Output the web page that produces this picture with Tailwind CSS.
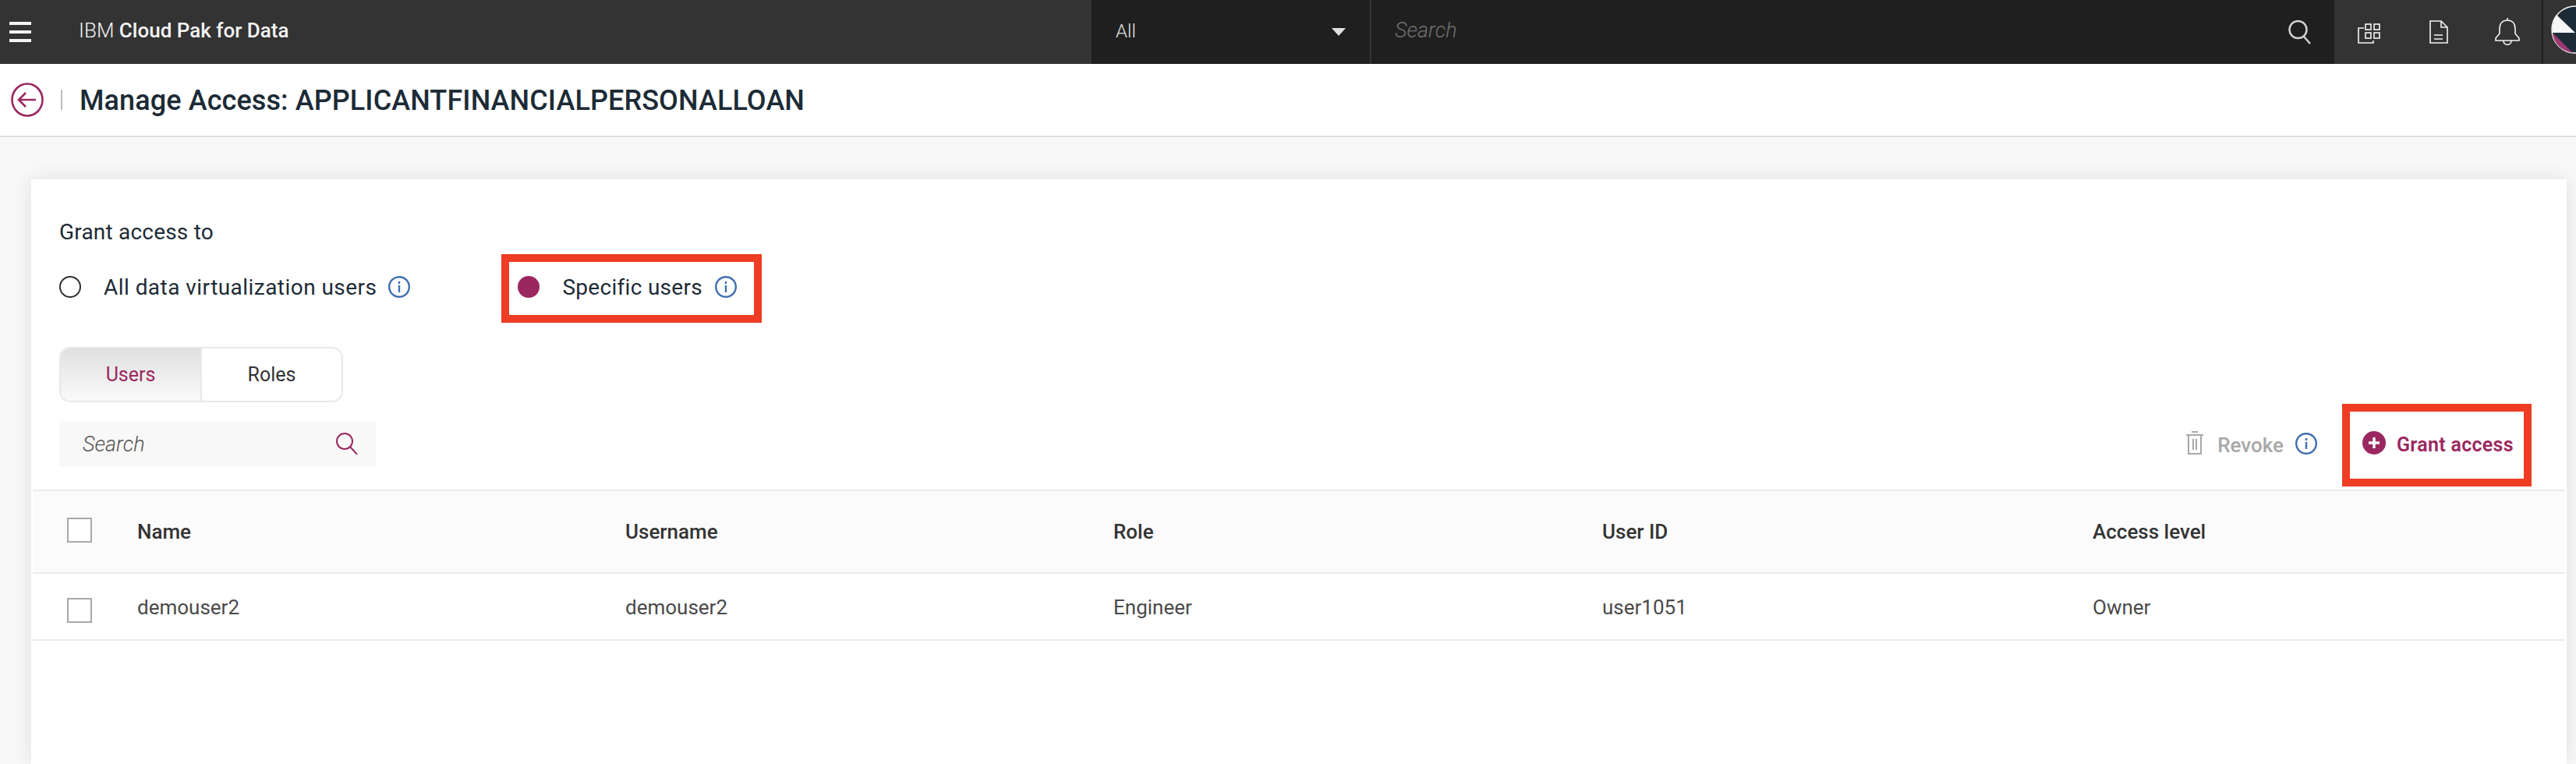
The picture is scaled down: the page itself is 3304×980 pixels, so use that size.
<!doctype html>
<html>
  <head>
    <title>Manage Access</title>
    <script src="https://cdn.jsdelivr.net/npm/@tailwindcss/browser@4"></script>
  </head>

  <body class="bg-[#f8f8f8] font-['Roboto',sans-serif] overflow-hidden">
    <div class="flex flex-col h-[980px] w-[3304px]">
      <!-- Top bar -->
      <header class="flex h-[82px] bg-[#333333] text-white shrink-0">
        <div class="w-[1400px] flex items-center">
          <svg class="ml-[12px] w-[28px] h-[26px]" viewBox="0 0 28 26" fill="#f4f4f4"><rect y="0" width="28" height="4"/><rect y="11" width="28" height="4"/><rect y="22" width="28" height="4"/></svg>
          <p class="ml-[61px] pb-[3px] text-[26px] text-[#f4f4f4]"><span class="font-light">IBM</span> <span class="font-medium">Cloud Pak for Data</span></p>
        </div>
        <div class="w-[359px] bg-[#1f1f1f] flex items-center pl-[31px] pr-[31px] justify-between border-r-2 border-[#333333]">
          <span class="pb-[3px] text-[24px] font-light text-[#e0e0e0]">All</span>
          <svg class="w-[18px] h-[10px]" viewBox="0 0 18 10" fill="#e0e0e0"><path d="M0 0h18L9 10z"/></svg>
        </div>
        <div class="w-[1235px] bg-[#1f1f1f] flex items-center justify-between pl-[30px] pr-[29px]">
          <span class="pb-[3px] text-[27px] italic font-light text-[#6f6f6f]">Search</span>
          <svg class="w-[30px] h-[32px]" viewBox="0 0 30 32" fill="none" stroke="#d0d0d0" stroke-width="2.5"><circle cx="12.5" cy="13" r="11"/><path d="M20 22l8 9"/></svg>
        </div>
        <div class="flex-1 flex items-center relative overflow-hidden">
          <svg class="absolute left-[30px] top-[26px] w-[30px] h-[30px]" viewBox="0 0 30 30" fill="none" stroke="#f4f4f4" stroke-width="1.6"><rect x="10" y="5" width="7" height="7"/><rect x="21" y="5" width="7" height="7"/><rect x="10" y="16" width="7" height="7"/><rect x="21" y="16" width="7" height="7"/><path d="M8 10H1v19h19v-3"/></svg>
          <svg class="absolute left-[122px] top-[26px] w-[24px] h-[30px]" viewBox="0 0 24 30" fill="none" stroke="#f4f4f4" stroke-width="1.6"><path d="M1 1h14l8 8v20H1zM15 1v8h8M6 19h11M6 24h11"/></svg>
          <svg class="absolute left-[205px] top-[22px] w-[34px] h-[36px]" viewBox="0 0 34 36" fill="none" stroke="#f4f4f4" stroke-width="1.6"><path d="M17 4c-6 0-10 4-10 11v6l-5 6v3h30v-3l-5-6v-6c0-7-4-11-10-11zM17 1v3M12 30c0 7 10 7 10 0"/></svg>
          <div class="absolute left-[266px] top-0 w-[2px] h-full bg-[#1f1f1f]"></div>
          <svg class="absolute left-[278px] top-[7px] w-[62px] h-[62px]" viewBox="0 0 62 62"><circle cx="31" cy="31" r="30" fill="#1c2b36" stroke="#f4f4f4" stroke-width="1.5"/><path d="M7 12L31 35H2C1 26 3 18 7 12z" fill="#f7f7f7"/><path d="M2 35L28 61C12 58 3 48 2 35z" fill="#9b3a72"/></svg>
        </div>
      </header>

      <!-- Page heading -->
      <div class="flex items-center h-[94px] bg-white border-b-2 border-[#e0e0e0] shrink-0">
        <svg class="ml-[14px] w-[42px] h-[44px]" viewBox="0 0 42 44" fill="none" stroke="#9b2760" stroke-width="2.6"><ellipse cx="21" cy="22" rx="19.5" ry="20.5"/><path d="M32 22H10M19 13l-9 9 9 9"/></svg>
        <div class="ml-[22px] w-[2px] h-[26px] bg-[#bdbdbd]"></div>
        <h1 class="ml-[22px] pt-[2px] text-[36px] tracking-[0.1px] font-medium text-[#1c2b36] whitespace-nowrap">Manage Access: APPLICANTFINANCIALPERSONALLOAN</h1>
      </div>

      <!-- Card -->
      <main class="flex-1 ml-[40px] mr-[12px] mt-[54px] bg-white shadow-[0_0_24px_rgba(0,0,0,0.1)]">
        <div class="pl-[36px] pr-[45px] pt-[50px]">
          <p class="text-[28px] leading-[36px] tracking-[0.2px] text-[#1c2b36]">Grant access to</p>

          <div class="flex items-center mt-[10px] h-[88px]">
            <div class="flex items-center pb-[4px]">
              <span class="w-[28px] h-[28px] rounded-full border-2 border-[#333333]"></span>
              <span class="ml-[29px] mt-[2px] text-[28px] tracking-[0.45px] text-[#1c2b36] whitespace-nowrap">All data virtualization users</span>
              <svg class="ml-[15px] w-[28px] h-[28px]" viewBox="0 0 28 28" fill="none" stroke="#3f6fb0" stroke-width="2.4"><circle cx="14" cy="14" r="12.8"/><path d="M14 12v9M14 7v3"/></svg>
            </div>
            <div class="flex items-center h-[88px] w-[334px] ml-[117px] pl-[11px] pb-[4px] border-[10px] border-[#ee3d24]">
              <span class="w-[28px] h-[28px] rounded-full bg-[#9b2760]"></span>
              <span class="ml-[29px] mt-[2px] text-[28px] tracking-[0.3px] text-[#1c2b36] whitespace-nowrap">Specific users</span>
              <svg class="ml-[16px] w-[28px] h-[28px]" viewBox="0 0 28 28" fill="none" stroke="#3f6fb0" stroke-width="2.4"><circle cx="14" cy="14" r="12.8"/><path d="M14 12v9M14 7v3"/></svg>
            </div>
          </div>

          <div class="flex w-[364px] h-[71px] mt-[31px] rounded-[14px] border-2 border-[#e8e8e8] overflow-hidden text-[25px]">
            <div class="w-[181px] flex items-center justify-center bg-gradient-to-b from-[#e0e0e0] to-[#fafafa] border-r-2 border-[#e8e8e8] text-[#9b2760]">Users</div>
            <div class="flex-1 flex items-center justify-center text-[#333333]">Roles</div>
          </div>

          <div class="flex justify-between items-start mt-[2px] h-[106px]">
            <div class="flex items-center justify-between w-[406px] h-[58px] mt-[22px] pl-[30px] pr-[22px] bg-[#f8f8f8]">
              <span class="pt-[2px] text-[27px] italic font-light text-[#555555]">Search</span>
              <svg class="w-[32px] h-[28px]" viewBox="0 0 32 28" fill="none" stroke="#9b2760" stroke-width="2"><circle cx="14" cy="11" r="10"/><path d="M21 18l9 10"/></svg>
            </div>
            <div class="flex items-center">
              <svg class="w-[22px] h-[30px] mb-[6px]" viewBox="0 0 22 30" fill="none" stroke="#a8a8a8" stroke-width="2"><path d="M0 5h22M7 1h8M3 5v24h16V5M9 10v14M13 10v14"/></svg>
              <span class="ml-[18px] text-[26px] font-medium text-[#a8a8a8]">Revoke</span>
              <svg class="ml-[15px] w-[28px] h-[28px] mb-[4px]" viewBox="0 0 28 28" fill="none" stroke="#3f6fb0" stroke-width="2.4"><circle cx="14" cy="14" r="12.8"/><path d="M14 12v9M14 7v3"/></svg>
              <div class="flex items-center h-[106px] w-[243px] ml-[32px] pl-[16px] border-[10px] border-[#ee3d24]">
                <svg class="w-[30px] h-[30px] mb-[6px] shrink-0" viewBox="0 0 30 30"><circle cx="15" cy="15" r="15" fill="#9b2760"/><path d="M15 8v14M8 15h14" stroke="#ffffff" stroke-width="3.4"/></svg>
                <span class="ml-[14px] text-[25px] tracking-[0.3px] font-semibold text-[#9b2760] whitespace-nowrap">Grant access</span>
              </div>
            </div>
          </div>
        </div>

        <!-- Table -->
        <div class="mt-[4px] ml-[2px] mr-[2px] border-y-2 border-[#ebebeb] text-[26px]">
          <div class="grid grid-cols-[134px_626px_626px_627px_629px_1fr] items-center h-[106px] bg-[#fbfbfb] border-b-2 border-[#ebebeb] font-medium text-[#333333]">
            <span class="ml-[44px] w-[32px] h-[32px] mb-[4px] border-2 border-[#a8a8a8] bg-white"></span>
            <span>Name</span>
            <span>Username</span>
            <span>Role</span>
            <span>User ID</span>
            <span>Access level</span>
          </div>
          <div class="grid grid-cols-[134px_626px_626px_627px_629px_1fr] items-center h-[84px] text-[#4a4a4a]">
            <span class="ml-[44px] w-[32px] h-[32px] mt-[10px] border-2 border-[#a8a8a8]"></span>
            <span class="pt-[2px]">demouser2</span>
            <span class="pt-[2px]">demouser2</span>
            <span class="pt-[2px]">Engineer</span>
            <span class="pt-[2px]">user1051</span>
            <span class="pt-[2px]">Owner</span>
          </div>
        </div>
      </main>
    </div>
  </body>
</html>
